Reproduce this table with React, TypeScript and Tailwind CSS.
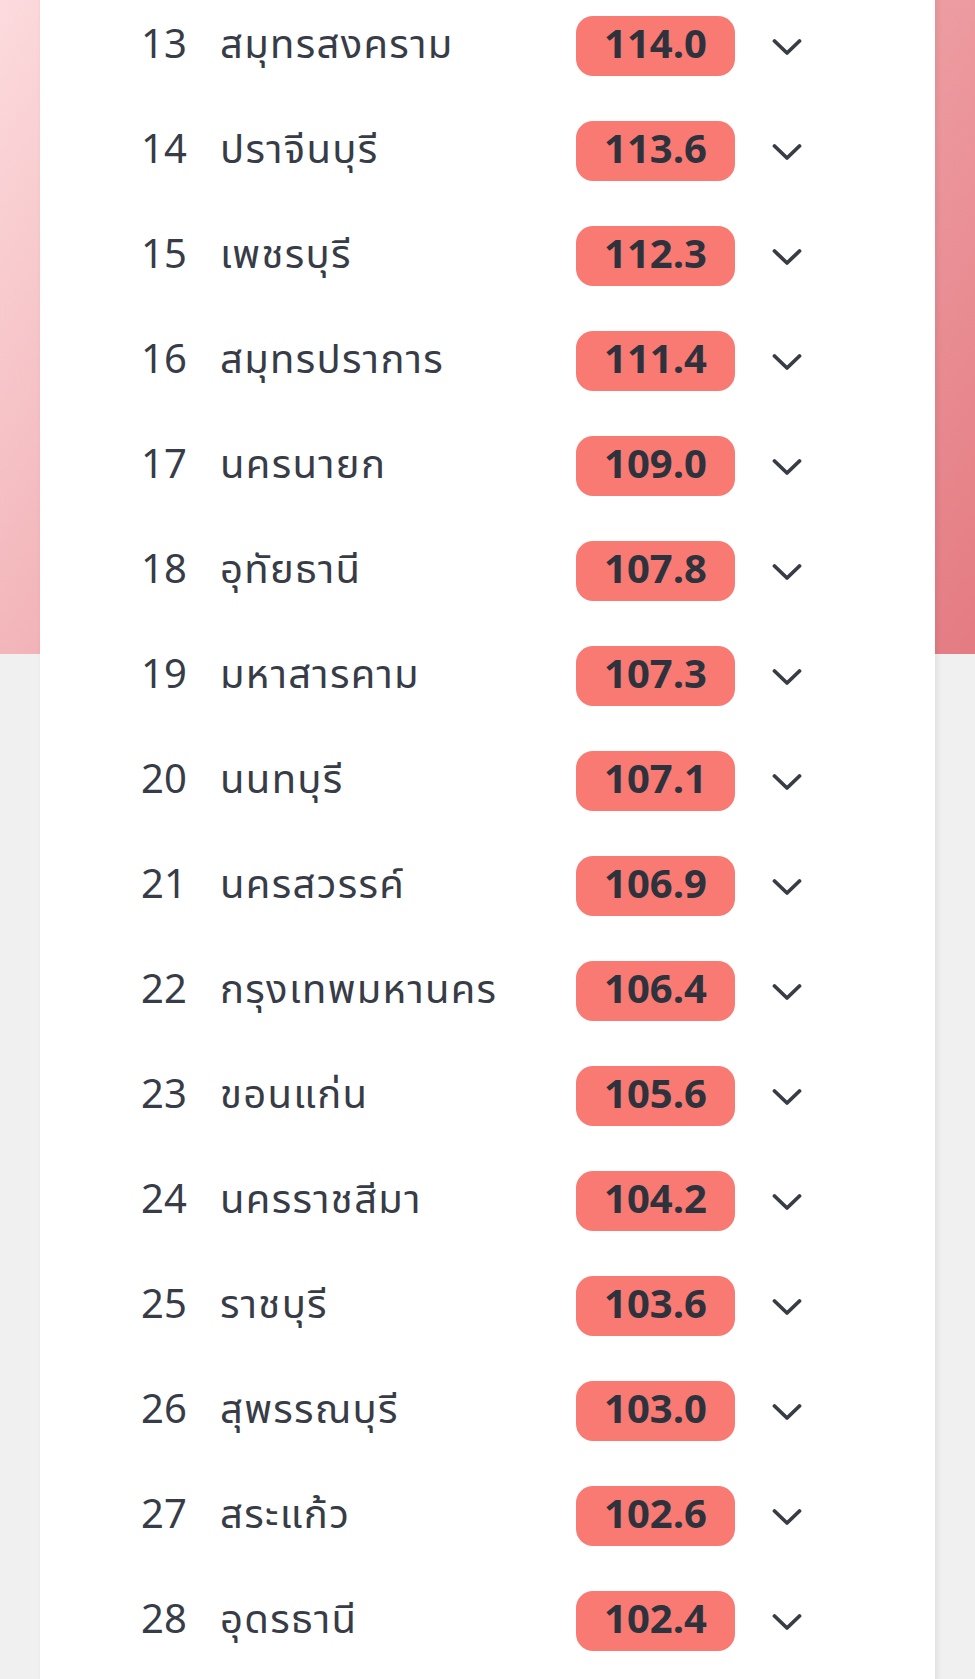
import React from "react";

const rows: [number, string, string][] = [
  [13, "สมุทรสงคราม", "114.0"],
  [14, "ปราจีนบุรี", "113.6"],
  [15, "เพชรบุรี", "112.3"],
  [16, "สมุทรปราการ", "111.4"],
  [17, "นครนายก", "109.0"],
  [18, "อุทัยธานี", "107.8"],
  [19, "มหาสารคาม", "107.3"],
  [20, "นนทบุรี", "107.1"],
  [21, "นครสวรรค์", "106.9"],
  [22, "กรุงเทพมหานคร", "106.4"],
  [23, "ขอนแก่น", "105.6"],
  [24, "นครราชสีมา", "104.2"],
  [25, "ราชบุรี", "103.6"],
  [26, "สุพรรณบุรี", "103.0"],
  [27, "สระแก้ว", "102.6"],
  [28, "อุดรธานี", "102.4"],
];

function Chevron() {
  return (
    <svg width="30" height="18" viewBox="0 0 30 18" fill="none">
      <path d="M2.5 3 L15 15 L27.5 3" stroke="#383c45" strokeWidth="3.8" strokeLinecap="round" strokeLinejoin="round" />
    </svg>
  );
}

export default function App() {
  return (
    <div
      className="relative h-[1679px] w-[975px] overflow-hidden bg-[#f0f0f0]"
      style={{ fontFamily: '"Noto Sans Thai", "Open Sans", "Noto Sans", sans-serif' }}
    >
      <div className="absolute left-0 top-0 h-[654px] w-full bg-[linear-gradient(to_right,#fcd6d9_0%,#f6c2c5_20%,#ee9ca2_80%,#ea8c92_100%)]">
        <div className="h-full w-full bg-[linear-gradient(to_bottom,rgba(255,255,255,0.12),rgba(205,55,65,0.2))]" />
      </div>
      <div className="relative mx-[40px] h-[1720px] bg-white shadow-[2px_0_6px_rgba(0,0,0,0.08)]">
        <div className="-mt-[7px] flex flex-col">
          {rows.map(([n, name, v]) => (
            <div key={n} className="flex h-[105px] items-center">
              <div className="box-content w-[79px] pl-[101px] text-[40px] font-[380] leading-none text-[#373c47]">{n}</div>
              <div className="w-[356px] whitespace-nowrap text-[40px] font-[380] leading-none tracking-[1.3px] text-[#373c47]">{name}</div>
              <div className="flex h-[60px] w-[159px] items-center justify-center rounded-[17px] bg-[#f87a72] text-[40px] font-bold leading-none text-[#2d323c]">
                {v}
              </div>
              <div className="ml-[37px] flex items-center pt-[2px]">
                <Chevron />
              </div>
            </div>
          ))}
        </div>
      </div>
    </div>
  );
}
